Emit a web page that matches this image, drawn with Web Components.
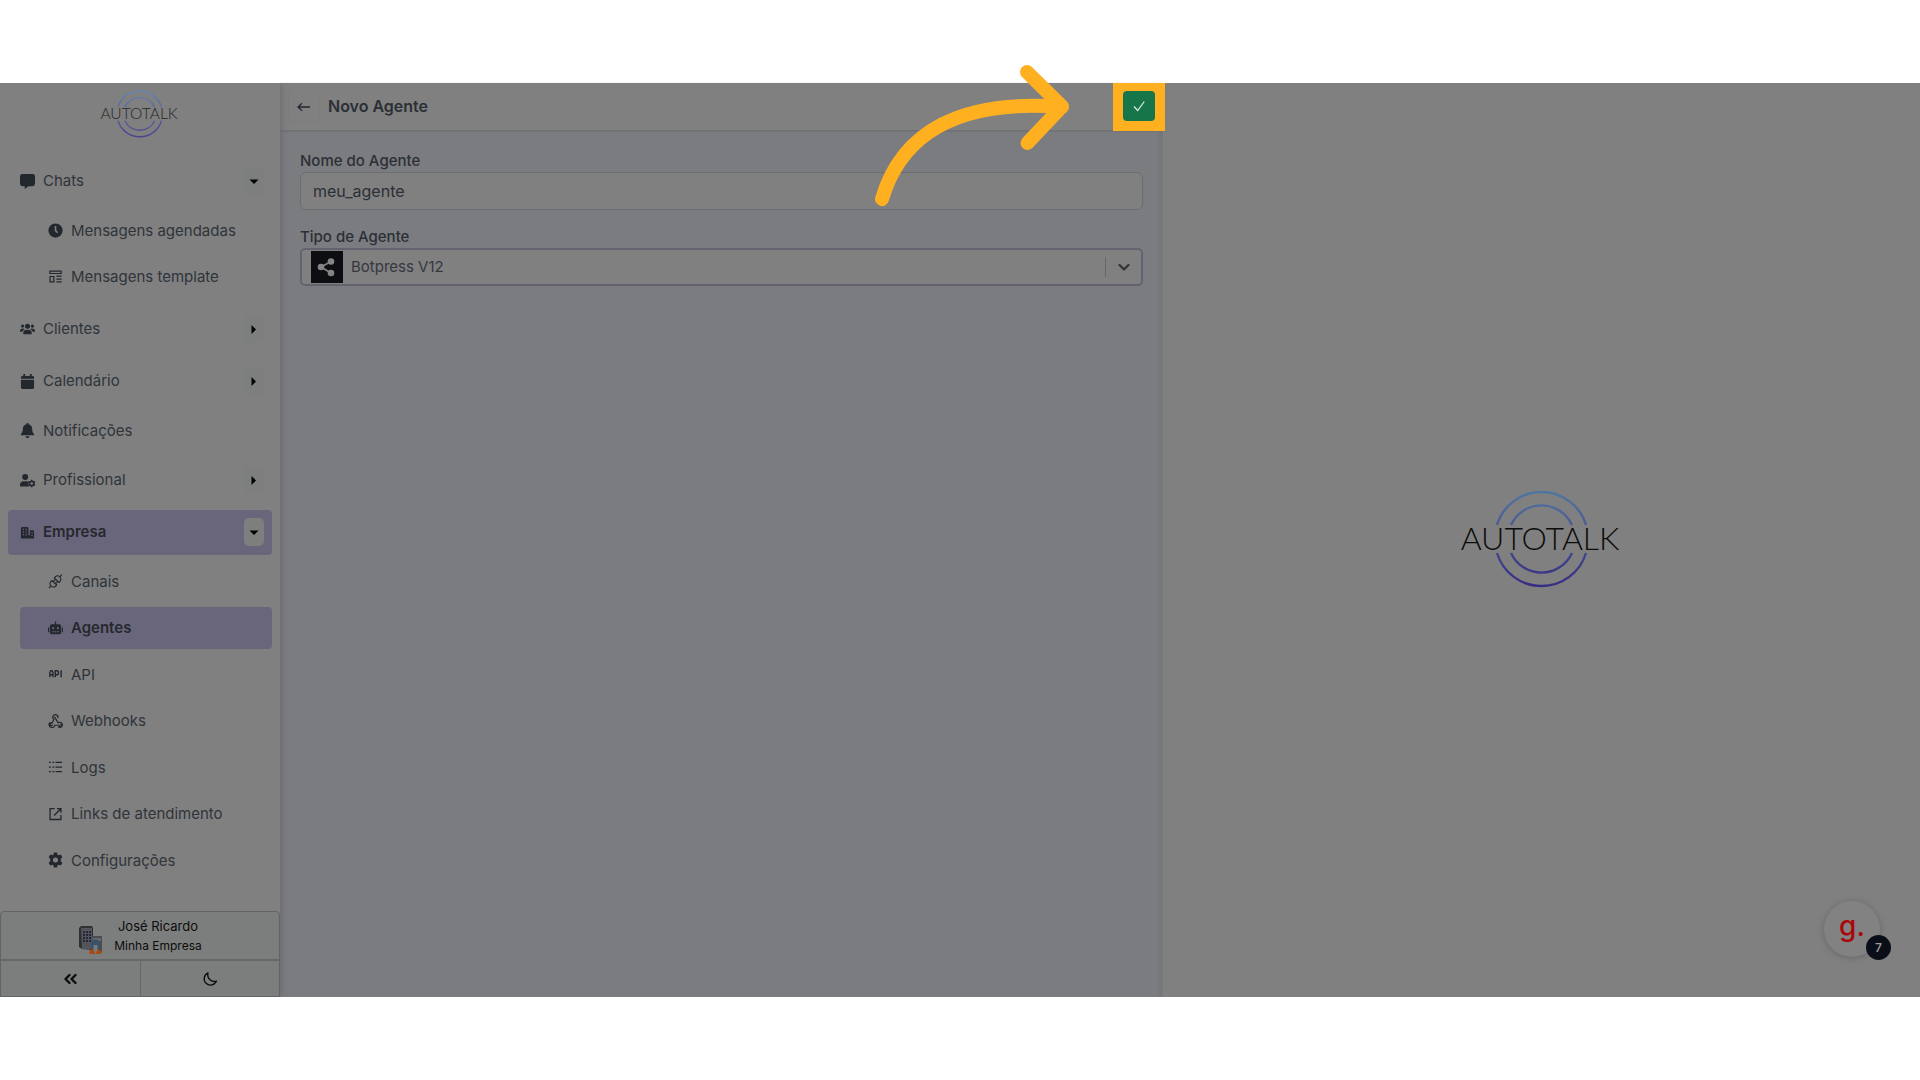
<!DOCTYPE html>
<html lang="pt-BR">
<head>
<meta charset="utf-8">
<meta name="viewport" content="width=device-width, initial-scale=1">
<title>Autotalk - Novo Agente</title>
<style>
  body {
    margin: 0;
    background: #fff;
    color: #2b2f36;
    font-family: Inter, "Liberation Sans", sans-serif;
    font-size: 15px;
    line-height: 20px;
    --surface: #808080;
    --surface-muted: #7b7c7f;
    --active: #69667c;
    --border: #6c6d72;
    --accent: #ffb020;
  }
</style>
</head>
<body>
<autotalk-app>
  <side-bar slot="sidebar">
    <nav-item icon="chat" toggle="down">Chats</nav-item>
    <nav-group>
      <nav-item sub icon="clock">Mensagens agendadas</nav-item>
      <nav-item sub icon="template">Mensagens template</nav-item>
    </nav-group>
    <nav-item icon="users" toggle="right">Clientes</nav-item>
    <nav-item icon="calendar" toggle="right">Calendário</nav-item>
    <nav-item icon="bell">Notificações</nav-item>
    <nav-item icon="user-gear" toggle="right">Profissional</nav-item>
    <nav-item icon="company" toggle="down" active>Empresa</nav-item>
    <nav-group>
      <nav-item sub icon="plug">Canais</nav-item>
      <nav-item sub icon="robot" active>Agentes</nav-item>
      <nav-item sub icon="api">API</nav-item>
      <nav-item sub icon="webhook">Webhooks</nav-item>
      <nav-item sub icon="list">Logs</nav-item>
      <nav-item sub icon="external">Links de atendimento</nav-item>
      <nav-item sub icon="gear">Configurações</nav-item>
    </nav-group>
    <user-panel slot="footer" name="José Ricardo" company="Minha Empresa"></user-panel>
  </side-bar>
  <agent-form slot="main" heading="Novo Agente"></agent-form>
  <preview-panel slot="preview">
    <brand-logo></brand-logo>
    <help-bubble slot="help" count="7"></help-bubble>
  </preview-panel>
</autotalk-app>

<script>
const ICONS = {
  chat: '<path d="M2.500 0h11A2.500 2.500 0 0 1 16 2.500v8a2.500 2.500 0 0 1-2.500 2.500H9l-4 3v-3H2.500A2.500 2.500 0 0 1 0 10.500v-8A2.500 2.500 0 0 1 2.500 0z"/>',
  clock: '<circle cx="8" cy="8" r="7.600"/><path d="M8 3.300V8l2.200 2.400" fill="none" stroke="#808080" stroke-width="1.700"/>',
  template: '<g fill="none" stroke="currentColor" stroke-width="1.300"><path d="M2 2.200h12v2.600H2zM2.200 8h4v5.800h-4zM9 7.700h5.500M9 10.700h5.500M9 13.800h5.500"/></g>',
  users: '<circle cx="8" cy="4.500" r="2.700"/><circle cx="2.700" cy="4.300" r="1.700"/><circle cx="13.300" cy="4.300" r="1.700"/><path d="M3.500 13v-1.500C3.500 9.500 5 8.300 8 8.300s4.500 1.200 4.500 3.200V13zM0 10c0-2.300 1-3.200 3.800-3.100L5 8c-1.600.6-2.300 1.400-2.500 2.500H0zM16 10c0-2.300-1-3.200-3.800-3.100L11 8c1.600.6 2.300 1.400 2.500 2.500H16z"/>',
  calendar: '<path d="M3.500 0h2v2h5V0h2v2h1A1.500 1.500 0 0 1 15 3.500V5H1V3.500A1.500 1.500 0 0 1 2.500 2h1zM1 6h14v8.500a1.500 1.500 0 0 1-1.500 1.500h-11A1.500 1.500 0 0 1 1 14.500z"/>',
  bell: '<path d="M7 0h2v1.400c2.700.5 4 2.500 4 5.100 0 2.500.6 3.700 2 5.300v1.200H1v-1.200c1.400-1.600 2-2.800 2-5.300 0-2.600 1.300-4.600 4-5.100zM6 14h4c0 1.300-.9 2-2 2s-2-.7-2-2z"/>',
  'user-gear': '<circle cx="5.500" cy="4.300" r="3.200"/><path d="M0 14.500v-2C0 10 1.600 8.700 4 8.700h3c1 0 1.700.2 2.300.6-.8 1.800-.6 3.600.8 5.200z"/><circle cx="12.500" cy="11.200" r="2.300" fill="none" stroke="currentColor" stroke-width="1.700"/><path d="M12.500 7.200v2M12.500 13.200v2M9 9.200l1.600 1M14.400 12.200l1.600 1M16 9.200l-1.600 1M10.600 12.200l-1.600 1" stroke="currentColor" stroke-width="1.500"/>',
  company: '<path fill-rule="evenodd" d="M1 3l1-1h6l1 1v8h1.500V5.500h3.500l1 1v8H1zM3 4v1.500h1.200V4zM5.800 4v1.500H7V4zM3 6.800v1.500h1.200V6.800zM5.800 6.800v1.500H7V6.800zM3 9.600v1.500h1.200V9.600zM5.800 9.600v1.500H7V9.600zM12.200 7.500V9h1.200V7.500zM12.200 10.500V12h1.200v-1.500z"/>',
  plug: '<g fill="none" stroke="currentColor" stroke-width="1.200" stroke-linejoin="round" transform="translate(8 8) rotate(-47)"><path d="M-10-.2h3.300M-1.800-3.500v7h-1.500a3.500 3.500 0 0 1 0-7zM-1.800-1.600H1.800M-1.800 1.600H1.800M1.800-3.500v7h1.500a3.500 3.500 0 0 0 0-7zM6.700 0H10"/></g>',
  robot: '<path fill-rule="evenodd" d="M7.300.5h1.400V3.500H12A2 2 0 0 1 14 5.500v6.700a2 2 0 0 1-2 2H4a2 2 0 0 1-2-2V5.500a2 2 0 0 1 2-2h3.300zM5.500 6.500a1.100 1.100 0 1 0 0 2.200 1.100 1.100 0 0 0 0-2.200zm5 0a1.100 1.100 0 1 0 0 2.200 1.100 1.100 0 0 0 0-2.200zM4.500 11v1h1.800v-1zm2.600 0v1h1.800v-1zm2.600 0v1h1.800v-1zM0 7h1.200v5H.6A.6.6 0 0 1 0 11.400zM14.800 7H16v4.400a.6.6 0 0 1-.6.600h-.6z"/>',
  api: '<g fill="none" stroke="currentColor" stroke-width="1.500"><path d="M2 11V5.500L3 4h1.300l1 1.500V11M2 8.200h3.300M7.800 11V4h2.300l1 1v2.300l-1 1H7.800M14 3.500V11"/></g>',
  webhook: '<g fill="none" stroke="currentColor" stroke-width="1.300"><path d="M10.600 4.300A2.800 2.800 0 1 0 6.300 5.900L4.200 9.800a1.400 1.400 0 1 0 .7 1.600M7.600 2.700a1.300 1.300 0 0 0 .4 2l2.700 4.500c2.200-1 4.700.2 4.700 2.400 0 2.400-3 3.500-4.700 1.800M13.300 11.100a1.200 1.200 0 1 1-1 .9H7.200c-.3 2-2 2.700-3.700 2.300C.6 13.600.2 10 2.700 8.800"/></g>',
  list: '<path fill="none" stroke="currentColor" stroke-width="1.300" d="M1 2.500h2M1 7.500h2M1 12.500h2M4.700 2.500h2M4.700 7.500h2M4.700 12.500h2M8 2.500h7M8 7.500h7M8 12.500h7"/>',
  external: '<path fill="none" stroke="currentColor" stroke-width="1.400" d="M7 1.700H2.200v11.600h11.600V8.500M9.500 1.700h4.300V6M13.600 1.900L6.500 9"/>',
  gear: '<path fill-rule="evenodd" d="M6.300-.5h3.400l.5 2.300 1.100.6 2.300-.7 1.700 2.900-1.700 1.700v2.400l1.700 1.700-1.700 2.900-2.300-.7-1.100.6-.5 2.300H6.300l-.5-2.300-1.100-.6-2.300.7L.7 10.400l1.700-1.700V6.300L.7 4.600l1.700-2.900 2.300.7 1.100-.6zM8 4.800a2.700 2.700 0 1 0 0 5.400 2.700 2.700 0 0 0 0-5.400z"/>',
  back: '<path fill="none" stroke="currentColor" stroke-width="1.300" d="M14 8H2M6 4.200L2 8l4 3.800"/>',
  check: '<path fill="none" stroke="currentColor" stroke-width="1.200" d="M3 8.500l3.700 4L13.300 3.500"/>',
  down: '<path d="M3.500 6.500h9L8 11z"/>',
  right: '<path d="M5.500 4v9L10 8.500z"/>',
  chevron: '<path fill="none" stroke="currentColor" stroke-width="2.200" stroke-linecap="round" stroke-linejoin="round" d="M3.500 6L8 10.400 12.500 6"/>',
  collapse: '<path fill="none" stroke="currentColor" stroke-width="2.400" stroke-linecap="round" stroke-linejoin="round" d="M6.500 4l-4 4 4 4M12.500 4l-4 4 4 4"/>',
  moon: '<path fill="none" stroke="currentColor" stroke-width="1.300" stroke-linejoin="round" d="M6 1.800a6.400 6.400 0 1 0 8.500 8.300C10 11.700 4.600 7.500 6 1.800z"/>',
};

function mount(el, html) {
  el.attachShadow({ mode: "open" }).innerHTML = html;
}

class UiIcon extends HTMLElement {
  connectedCallback() {
    if (this.shadowRoot) return;
    mount(this, `
      <style>
        :host { display: inline-flex; flex: none; width: 16px; height: 16px; }
        svg { width: 100%; height: 100%; fill: currentColor; overflow: visible; }
      </style>
      <svg viewBox="0 0 16 16" aria-hidden="true">${ICONS[this.getAttribute("name")] || ""}</svg>
    `);
  }
}

class BrandLogo extends HTMLElement {
  connectedCallback() {
    if (this.shadowRoot) return;
    mount(this, `
      <style>
        :host { display: block; width: 160px; color: #0c0c0c; --logo-top: #4f76a0; --logo-mid: #4c5a93; --logo-bottom: #352c82; --ring: 2.400px; }
        :host([small]) { width: 78px; color: #262626; --logo-top: #6485ad; --logo-mid: #5a69a3; --logo-bottom: #4c4290; --ring: 3px; }
        svg { display: block; width: 100%; overflow: visible; }
        g { fill: none; stroke: url(#ring); stroke-width: var(--ring); }
        text { font: 300 32px Lato, sans-serif; fill: currentColor; text-anchor: middle; }
      </style>
      <svg viewBox="0 0 160 96">
        <defs>
          <linearGradient id="ring" gradientUnits="userSpaceOnUse" x1="0" y1="0" x2="0" y2="96">
            <stop offset="0" stop-color="var(--logo-top)"/>
            <stop offset=".35" stop-color="var(--logo-mid)"/>
            <stop offset="1" stop-color="var(--logo-bottom)"/>
          </linearGradient>
        </defs>
        <g>
          <path d="M35 33a46.500 46.500 0 0 1 89 0M35 61a46.500 46.500 0 0 0 89 0"/>
          <path d="M49 33a33.500 33.500 0 0 1 61 0M49 61a33.500 33.500 0 0 0 61 0"/>
        </g>
        <text x="78" y="58">AUTOTALK</text>
      </svg>
    `);
  }
}

class NavItem extends HTMLElement {
  connectedCallback() {
    if (this.shadowRoot) return;
    const toggle = this.getAttribute("toggle");
    mount(this, `
      <style>
        :host {
          display: flex;
          align-items: center;
          box-sizing: border-box;
          min-height: ${toggle ? 45 : 40}px;
          margin: 0 8px;
          padding: 0 8px 0 12px;
          border-radius: 4px;
          color: #2f343a;
        }
        :host([sub]) { min-height: 42px; margin-left: 20px; padding-left: 28px; }
        :host([active]) { background: var(--active); font-weight: 600; color: #26282e; }
        a { display: flex; flex: 1; align-items: center; gap: 8px; color: inherit; text-decoration: none; }
        a ui-icon { width: 15px; height: 15px; color: #23282e; }
        button {
          display: grid;
          place-items: center;
          width: 20px;
          height: 28px;
          padding: 0;
          border: 0;
          border-radius: 5px;
          background: #7d7f7f;
          color: #000;
        }
      </style>
      <a href="#"><ui-icon name="${this.getAttribute("icon")}"></ui-icon><span><slot></slot></span></a>
      ${toggle ? `<button type="button" aria-label="${this.textContent}"><ui-icon name="${toggle}"></ui-icon></button>` : ""}
    `);
  }
}

class NavGroup extends HTMLElement {
  connectedCallback() {
    if (this.shadowRoot) return;
    mount(this, `
      <style>
        :host { display: flex; flex-direction: column; gap: 4px; margin: -1px 0 2px; }
        :host(:last-of-type) { min-height: 321px; justify-content: space-between; gap: 0; }
      </style>
      <slot></slot>
    `);
  }
}

class UserPanel extends HTMLElement {
  connectedCallback() {
    if (this.shadowRoot) return;
    mount(this, `
      <style>
        :host {
          display: block;
          border: 1px solid #626369;
          border-radius: 4px 4px 0 0;
          background: #7c7e7d;
          color: #0c0c0c;
        }
        .user { display: flex; align-items: center; justify-content: center; gap: 12px; height: 47px; }
        .user svg { width: 24px; height: 30px; margin-top: 8px; }
        .who { text-align: center; font-size: 13px; line-height: 20px; }
        small { display: block; font-size: 12px; }
        .tools { display: grid; grid-template-columns: 1fr 1fr; border-top: 2px solid #66676d; }
        button { display: grid; place-items: center; height: 35px; padding: 0; border: 0; background: none; color: #0c0c0c; }
        button + button { border-left: 1px solid #66676d; }
      </style>
      <div class="user">
        <svg viewBox="0 0 24 30" aria-hidden="true">
          <path d="M1 3l2-2h11l1 2v22l-11-1-3-2z" fill="#2f3033"/>
          <path d="M3 3h11v21H4z" fill="#54555a"/>
          <path d="M5 6h2v2H5zM8 6h2v2H8zM11 6h2v2h-2zM5 9h2v2H5zM8 9h2v2H8zM11 9h2v2h-2zM5 12h2v2H5zM8 12h2v2H8zM11 12h2v2h-2zM5 15h2v2H5zM8 15h2v2H8zM11 15h2v2h-2z" fill="#25283a"/>
          <path d="M14 11h10v16H14z" fill="#4a4c51"/><path d="M15 13h8v3h-8z" fill="#66686c"/>
          <path d="M11 28c0-3 3-4 6-4s7 1 7 4l-3 1h-8z" fill="#a84b10"/>
          <ellipse cx="17.500" cy="19.500" rx="4.500" ry="5" fill="#385269"/>
          <path d="M15.500 20h4v5l-2 4-2-4z" fill="#777b80"/>
        </svg>
        <div class="who">${this.getAttribute("name")}<small>${this.getAttribute("company")}</small></div>
      </div>
      <div class="tools">
        <button type="button" aria-label="Recolher menu"><ui-icon name="collapse"></ui-icon></button>
        <button type="button" aria-label="Modo escuro"><ui-icon name="moon"></ui-icon></button>
      </div>
    `);
  }
}

class SideBar extends HTMLElement {
  connectedCallback() {
    if (this.shadowRoot) return;
    mount(this, `
      <style>
        :host {
          display: flex;
          flex-direction: column;
          position: relative;
          z-index: 4;
          background: var(--surface);
          box-shadow: 1px 0 6px #5c5c6499;
          clip-path: inset(0 -12px 0 0);
        }
        header { display: flex; justify-content: center; padding: 8px 0 21px; }
        nav { display: flex; flex: 1; flex-direction: column; gap: 7px; }
      </style>
      <header><brand-logo small></brand-logo></header>
      <nav><slot></slot></nav>
      <slot name="footer"></slot>
    `);
  }
}

class AgentForm extends HTMLElement {
  connectedCallback() {
    if (this.shadowRoot) return;
    mount(this, `
      <style>
        :host {
          display: flex;
          flex-direction: column;
          position: relative;
          z-index: 3;
          background: var(--surface-muted);
        }
        header {
          display: flex;
          align-items: center;
          position: relative;
          gap: 8px;
          height: 47px;
          padding: 0 8px;
          background: var(--surface);
          box-shadow: 0 1px 2px #66676dcc;
        }
        h1 { flex: 1; margin: 0; padding-bottom: 2px; font-size: 16px; line-height: 20px; font-weight: 600; }
        button { display: grid; place-items: center; width: 32px; height: 30px; padding: 0; border-radius: 4px; }
        .back { border: 1px solid #7d7d7d; background: none; color: #23282e; }
        .spot { position: relative; margin-right: -10px; border: 10px solid var(--accent); border-top-width: 8px; background: var(--accent); }
        .save { border: 0; background: #17754a; color: #dfe8e3; }
        .pointer { position: absolute; top: -26px; right: calc(100% + 54px); width: 194px; height: 142px; overflow: visible; pointer-events: none; }
        form { display: flex; flex: 1; flex-direction: column; padding: 21px 20px 0; box-shadow: inset -5px 0 #77787c; }
        label { line-height: 20px; font-weight: 500; }
        input, .select { box-sizing: border-box; height: 38px; border: 1px solid var(--border); border-radius: 6px; background: var(--surface); }
        input { margin: 1px 0 17px; padding: 0 12px; color: inherit; font: inherit; font-size: 16px; outline: 0; }
        .select { display: flex; align-items: center; margin-top: 1px; padding-left: 9px; border: 2px solid #62636f; border-radius: 5px; }
        .select svg { width: 32px; height: 32px; flex: none; }
        select {
          flex: 1;
          height: 32px;
          padding: 0 8px;
          border: 0;
          background: none;
          color: #34383e;
          font: inherit;
          appearance: none;
          outline: 0;
        }
        .arrow { display: grid; place-items: center; width: 35px; height: 20px; border-left: 1px solid #66676b; color: #333; }
      </style>
      <header>
        <button class="back" type="button" aria-label="Voltar"><ui-icon name="back"></ui-icon></button>
        <h1>${this.getAttribute("heading")}</h1>
        <div class="spot">
          <button class="save" type="submit" form="agent" aria-label="Salvar"><ui-icon name="check"></ui-icon></button>
          <svg class="pointer" viewBox="0 0 194 142" fill="none" stroke="#ffb020" stroke-width="14" stroke-linecap="round" stroke-linejoin="round" aria-hidden="true">
            <path d="M7 134C27 66 87 34 187 42M152 7l35 34.500L152.500 78"/>
          </svg>
        </div>
      </header>
      <form id="agent">
        <label for="name">Nome do Agente</label>
        <input id="name" type="text" value="meu_agente">
        <label for="type">Tipo de Agente</label>
        <div class="select">
          <svg viewBox="0 0 32 32" aria-hidden="true">
            <path d="M0 0h32v32H0z" fill="#0d0e12"/>
            <path d="M20 10.500L10 16l10 6" fill="none" stroke="#808080" stroke-width="1.800"/>
            <g fill="#858585"><circle cx="20" cy="10.500" r="3.300"/><circle cx="10" cy="16" r="3.300"/><circle cx="20" cy="22" r="3.300"/></g>
          </svg>
          <select id="type"><option>Botpress V12</option></select>
          <span class="arrow"><ui-icon name="chevron"></ui-icon></span>
        </div>
      </form>
    `);
  }
}

class HelpBubble extends HTMLElement {
  connectedCallback() {
    if (this.shadowRoot) return;
    mount(this, `
      <style>
        :host { display: block; position: relative; width: 56px; height: 56px; }
        button {
          width: 100%;
          height: 100%;
          padding: 0 0 6px;
          border: 0;
          border-radius: 50%;
          background: #828282;
          box-shadow: 0 1px 6px #55555599;
          color: #a9060b;
          font: 500 28px Inter, sans-serif;
        }
        .count {
          display: grid;
          place-items: center;
          position: absolute;
          right: -11px;
          bottom: -3px;
          width: 25px;
          height: 25px;
          border-radius: 50%;
          background: #090e19;
          color: #9a9a9d;
          font-size: 12px;
          font-weight: 600;
        }
      </style>
      <button type="button">g.</button>
      <span class="count">${this.getAttribute("count")}</span>
    `);
  }
}

class PreviewPanel extends HTMLElement {
  connectedCallback() {
    if (this.shadowRoot) return;
    mount(this, `
      <style>
        :host { display: grid; place-items: center; position: relative; background: var(--surface); }
        .help { position: absolute; right: 40px; bottom: 40px; }
      </style>
      <slot></slot>
      <div class="help"><slot name="help"></slot></div>
    `);
  }
}

class AutotalkApp extends HTMLElement {
  connectedCallback() {
    if (this.shadowRoot) return;
    mount(this, `
      <style>
        :host {
          display: grid;
          grid-template-columns: 280px 7fr 6fr;
          box-sizing: border-box;
          min-height: 100vh;
          padding: 83px 0;
        }
      </style>
      <slot name="sidebar"></slot>
      <slot name="main"></slot>
      <slot name="preview"></slot>
    `);
  }
}

customElements.define("ui-icon", UiIcon);
customElements.define("brand-logo", BrandLogo);
customElements.define("nav-item", NavItem);
customElements.define("nav-group", NavGroup);
customElements.define("user-panel", UserPanel);
customElements.define("side-bar", SideBar);
customElements.define("agent-form", AgentForm);
customElements.define("help-bubble", HelpBubble);
customElements.define("preview-panel", PreviewPanel);
customElements.define("autotalk-app", AutotalkApp);
</script>
</body>
</html>
